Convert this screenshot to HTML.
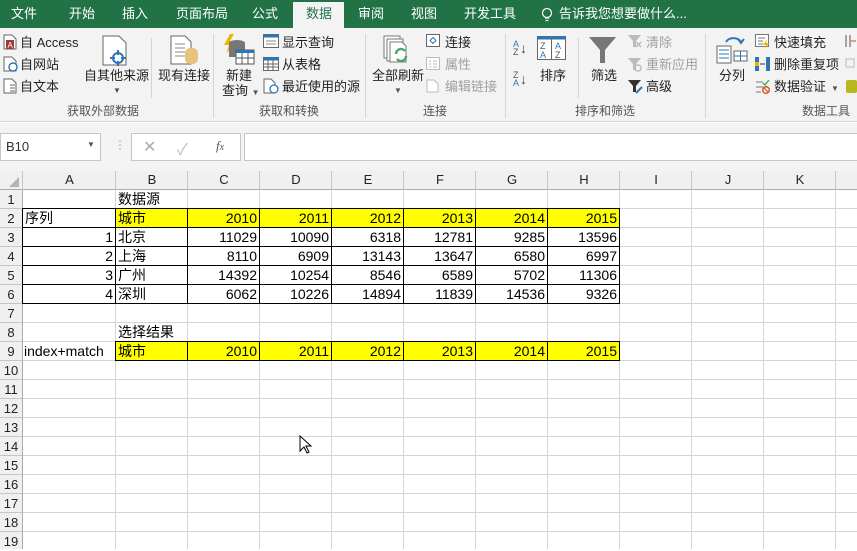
<!DOCTYPE html>
<html><head><meta charset="utf-8">
<style>
*{margin:0;padding:0;box-sizing:border-box}
body{width:857px;height:549px;overflow:hidden;position:relative;background:#fff;font-family:"Liberation Sans","Noto Sans CJK SC",sans-serif;color:#000}
.a{position:absolute;white-space:nowrap}
#tabs{left:0;top:0;width:857px;height:28px;background:#217346}
.t{position:absolute;top:0;height:28px;line-height:28px;color:#fff;font-size:13px}
#rib{left:0;top:28px;width:857px;height:94px;background:#f3f3f3;border-bottom:1px solid #d5d5d5}
.r{position:absolute;font-size:12px;color:#222;white-space:nowrap;line-height:16px}
.g{color:#555}
.dis{color:#a0a0a0}
.sep{position:absolute;top:6px;width:1px;height:84px;background:#d4d4d4}
.hd{position:absolute;font-size:13px;color:#222;text-align:center;line-height:18px}
.c{position:absolute;font-size:14px;line-height:19px;height:19px;white-space:nowrap}
.n{text-align:right;width:70px}
.vl{position:absolute;width:1px;background:#000}
.hl{position:absolute;height:1px;background:#000}
</style></head><body>
<div id="tabs" class="a">
<span class="t" style="left:11px">文件</span>
<span class="t" style="left:69px">开始</span>
<span class="t" style="left:122px">插入</span>
<span class="t" style="left:176px">页面布局</span>
<span class="t" style="left:252px">公式</span>
<div class="a" style="left:293px;top:2px;width:51px;height:26px;background:#f3f3f3"></div>
<span class="t" style="left:306px;color:#217346">数据</span>
<span class="t" style="left:358px">审阅</span>
<span class="t" style="left:411px">视图</span>
<span class="t" style="left:464px">开发工具</span>
<svg class="a" style="left:541px;top:7px" width="12" height="16"><circle cx="6" cy="6" r="4.5" fill="none" stroke="#fff" stroke-width="1.2"/><path d="M4 11h4M4.5 13.5h3" stroke="#fff" stroke-width="1.2"/></svg>
<span class="t" style="left:559px">告诉我您想要做什么...</span>
</div>
<div id="rib" class="a">
<svg class="a" style="left:3px;top:6px" width="16" height="16"><path d="M1 1h8l4 4v10H1z" fill="#fff" stroke="#666"/><rect x="3" y="6" width="8" height="9" fill="#a4373a"/><text x="4.5" y="14" font-size="8" fill="#fff" font-family="Liberation Sans">A</text></svg>
<span class="r" style="left:20px;top:7px;font-size:13px">自 Access</span>
<svg class="a" style="left:3px;top:28px" width="16" height="16"><path d="M1 1h8l4 4v10H1z" fill="#fff" stroke="#666"/><circle cx="10" cy="11" r="4" fill="#fff" stroke="#2e75b6" stroke-width="1.4"/></svg>
<span class="r" style="left:20px;top:29px;font-size:13px">自网站</span>
<svg class="a" style="left:3px;top:50px" width="16" height="16"><path d="M1 1h8l4 4v10H1z" fill="#fff" stroke="#666"/><path d="M7 7h5M7 10h5M7 13h5" stroke="#666"/></svg>
<span class="r" style="left:20px;top:51px;font-size:13px">自文本</span>
<svg class="a" style="left:102px;top:7px" width="28" height="32"><path d="M1 1h16l7 7v22H1z" fill="#fff" stroke="#666"/><circle cx="16" cy="23" r="5" fill="none" stroke="#2e75b6" stroke-width="2"/><path d="M16 15v5M16 26v5M8 23h5M19 23h5" stroke="#2e75b6" stroke-width="2"/></svg>
<span class="r" style="left:84px;top:40px;font-size:13px">自其他来源</span>
<span class="r g" style="left:113px;top:55px;font-size:8px">▼</span>
<div class="sep" style="left:151px;top:10px;height:60px"></div>
<svg class="a" style="left:170px;top:7px" width="30" height="30"><path d="M1 1h14l6 6v22H1z" fill="#fff" stroke="#666"/><path d="M5 9h10M5 13h10M5 17h10M5 21h10" stroke="#888"/><rect x="15" y="13" width="13" height="16" rx="5" fill="#e8c27a"/></svg>
<span class="r" style="left:158px;top:40px;font-size:13px">现有连接</span>
<span class="r g" style="left:67px;top:75px">获取外部数据</span>
<div class="sep" style="left:213px"></div>
<svg class="a" style="left:222px;top:5px" width="34" height="32"><path d="M8 1L2 12h5l-3 9 9-13H8l4-7z" fill="#f0b400"/><ellipse cx="15" cy="10" rx="8" ry="3" fill="#777"/><rect x="7" y="10" width="16" height="14" fill="#777"/><rect x="14" y="17" width="18" height="14" fill="#fff" stroke="#555"/><rect x="14" y="17" width="18" height="3" fill="#2e75b6"/><path d="M20 20v11M26 20v11M14 25h18" stroke="#555"/></svg>
<span class="r" style="left:226px;top:40px;font-size:13px">新建</span>
<span class="r" style="left:222px;top:55px;font-size:13px">查询 <span style="font-size:8px;color:#555">▼</span></span>
<svg class="a" style="left:263px;top:6px" width="16" height="14"><rect x="0.5" y="0.5" width="15" height="13" fill="#fff" stroke="#666"/><rect x="0.5" y="0.5" width="15" height="3" fill="#2e75b6"/><path d="M3 7h10M3 10h10" stroke="#888"/></svg>
<span class="r" style="left:282px;top:7px;font-size:13px">显示查询</span>
<svg class="a" style="left:263px;top:29px" width="16" height="14"><rect x="0.5" y="0.5" width="15" height="13" fill="#fff" stroke="#666"/><rect x="0.5" y="0.5" width="15" height="3" fill="#2e75b6"/><path d="M5 3v11M10 3v11M0 7h16M0 10h16" stroke="#666"/></svg>
<span class="r" style="left:282px;top:29px;font-size:13px">从表格</span>
<svg class="a" style="left:263px;top:50px" width="16" height="16"><path d="M1 1h7l4 4v10H1z" fill="#fff" stroke="#666"/><circle cx="11" cy="11" r="4" fill="#fff" stroke="#2e75b6" stroke-width="1.3"/></svg>
<span class="r" style="left:282px;top:51px;font-size:13px">最近使用的源</span>
<span class="r g" style="left:259px;top:75px">获取和转换</span>
<div class="sep" style="left:365px"></div>
<svg class="a" style="left:382px;top:6px" width="30" height="30"><path d="M2 2h16v22H2z" fill="#fff" stroke="#777"/><path d="M5 5h16v22H5z" fill="#fff" stroke="#777"/><path d="M8 8h12l4 4v16H8z" fill="#fff" stroke="#777"/><path d="M14 20a5 5 0 0 1 9-3M24 22a5 5 0 0 1-9 3" stroke="#4aa564" stroke-width="2.4" fill="none"/></svg>
<span class="r" style="left:372px;top:40px;font-size:13px">全部刷新</span>
<span class="r g" style="left:394px;top:55px;font-size:8px">▼</span>
<svg class="a" style="left:426px;top:6px" width="14" height="14"><rect x="0.5" y="0.5" width="13" height="12" fill="#fff" stroke="#666"/><path d="M4 6.5l3-3 3 3-3 3z" fill="none" stroke="#2e75b6"/></svg>
<span class="r" style="left:445px;top:7px;font-size:13px">连接</span>
<svg class="a" style="left:426px;top:29px" width="14" height="14"><rect x="0.5" y="0.5" width="13" height="12" fill="#fff" stroke="#bbb"/><path d="M3 4h2M7 4h4M3 7h2M7 7h4M3 10h2M7 10h4" stroke="#bbb"/></svg>
<span class="r dis" style="left:445px;top:29px;font-size:13px">属性</span>
<svg class="a" style="left:426px;top:51px" width="14" height="14"><path d="M1 1h7l4 4v8H1z" fill="#fff" stroke="#bbb"/></svg>
<span class="r dis" style="left:445px;top:51px;font-size:13px">编辑链接</span>
<span class="r g" style="left:423px;top:75px">连接</span>
<div class="sep" style="left:505px"></div>
<span class="r" style="left:513px;top:12px;font-size:9px;color:#2e75b6;line-height:8px">A<br><span style="color:#555">Z</span></span>
<span class="r" style="left:520px;top:12px;font-size:14px;color:#444">↓</span>
<span class="r" style="left:513px;top:43px;font-size:9px;color:#555;line-height:8px">Z<br><span style="color:#2e75b6">A</span></span>
<span class="r" style="left:520px;top:43px;font-size:14px;color:#444">↓</span>
<svg class="a" style="left:537px;top:8px" width="30" height="25"><rect x="0.5" y="0.5" width="28" height="23" fill="#fff" stroke="#666"/><rect x="0.5" y="0.5" width="28" height="3" fill="#2e75b6"/><path d="M14.5 3v21" stroke="#666"/><text x="3" y="13" font-size="9" fill="#555" font-family="Liberation Sans">Z</text><text x="18" y="13" font-size="9" fill="#2e75b6" font-family="Liberation Sans">A</text><text x="3" y="22" font-size="9" fill="#2e75b6" font-family="Liberation Sans">A</text><text x="18" y="22" font-size="9" fill="#555" font-family="Liberation Sans">Z</text></svg>
<span class="r" style="left:540px;top:40px;font-size:13px">排序</span>
<div class="sep" style="left:578px;top:10px;height:60px"></div>
<svg class="a" style="left:588px;top:8px" width="30" height="28"><path d="M1 1h27L17 14v13h-5V14z" fill="#777"/></svg>
<span class="r" style="left:591px;top:40px;font-size:13px">筛选</span>
<svg class="a" style="left:627px;top:6px" width="16" height="15"><path d="M1 1h13L9 7v6H6V7z" fill="#bbb"/><path d="M9 8l5 5M14 8l-5 5" stroke="#bbb" stroke-width="1.5"/></svg>
<span class="r dis" style="left:646px;top:7px;font-size:13px">清除</span>
<svg class="a" style="left:627px;top:29px" width="16" height="15"><path d="M1 1h13L9 7v6H6V7z" fill="#bbb"/><circle cx="11" cy="11" r="3" fill="none" stroke="#bbb" stroke-width="1.4"/></svg>
<span class="r dis" style="left:646px;top:29px;font-size:13px">重新应用</span>
<svg class="a" style="left:627px;top:51px" width="16" height="15"><path d="M1 1h13L9 7v6H6V7z" fill="#333"/><path d="M9 14l6-6" stroke="#2e75b6" stroke-width="2"/></svg>
<span class="r" style="left:646px;top:51px;font-size:13px">高级</span>
<span class="r g" style="left:575px;top:75px">排序和筛选</span>
<div class="sep" style="left:705px"></div>
<svg class="a" style="left:716px;top:6px" width="32" height="30"><path d="M10 8a8 6 0 0 1 15 0" fill="none" stroke="#2e75b6" stroke-width="2"/><path d="M22 5l3 4 3-4" fill="none" stroke="#2e75b6" stroke-width="2"/><rect x="1" y="12" width="14" height="17" fill="#fff" stroke="#666"/><path d="M3 16h10M3 20h10M3 24h10" stroke="#2e75b6"/><rect x="18" y="17" width="13" height="10" fill="#fff" stroke="#666"/><path d="M24.5 17v10M18 22h13" stroke="#2e75b6"/></svg>
<span class="r" style="left:719px;top:40px;font-size:13px">分列</span>
<svg class="a" style="left:755px;top:6px" width="16" height="15"><rect x="0.5" y="0.5" width="13" height="12" fill="#fff" stroke="#777"/><path d="M3 4h7M3 7h5M3 10h5" stroke="#777"/><path d="M12 5l-4 6h3l-1 4 4-6h-3z" fill="#f0b400"/></svg>
<span class="r" style="left:774px;top:7px;font-size:13px">快速填充</span>
<svg class="a" style="left:755px;top:29px" width="16" height="15"><rect x="0" y="0" width="4" height="14" fill="#2e75b6"/><rect x="0" y="5" width="4" height="4" fill="#f0b400"/><rect x="11" y="0" width="4" height="14" fill="#2e75b6"/><path d="M5 7h5" stroke="#333"/></svg>
<span class="r" style="left:774px;top:29px;font-size:13px">删除重复项</span>
<svg class="a" style="left:755px;top:51px" width="16" height="15"><path d="M1 3h7M1 8h7M1 13h5" stroke="#777"/><path d="M8 4l2 2 4-5" stroke="#4aa564" fill="none" stroke-width="1.4"/><circle cx="11" cy="11" r="3.3" fill="none" stroke="#d04a02" stroke-width="1.3"/><path d="M9 9l4 4" stroke="#d04a02"/></svg>
<span class="r" style="left:774px;top:51px;font-size:13px">数据验证</span>
<span class="r g" style="left:831px;top:53px;font-size:8px">▼</span>
<svg class="a" style="left:845px;top:6px" width="12" height="64"><path d="M1 1v12M5 1v12" stroke="#555"/><path d="M6 7h5" stroke="#d04a02"/><rect x="1" y="25" width="8" height="8" fill="none" stroke="#bbb"/><rect x="1" y="46" width="11" height="13" rx="2" fill="#b8b81e"/></svg>
<span class="r g" style="left:802px;top:75px">数据工具</span>
</div>
<div class="a" style="left:0;top:123px;width:857px;height:48px;background:#f3f3f3"></div>
<div class="a" style="left:0;top:133px;width:101px;height:28px;background:#fff;border:1px solid #c6c6c6"></div>
<span class="a" style="left:6px;top:137px;font-size:13px;line-height:20px;color:#333">B10</span>
<span class="a" style="left:87px;top:140px;font-size:8px;color:#555">▼</span>
<span class="a" style="left:114px;top:138px;font-size:12px;color:#aaa">⋮</span>
<div class="a" style="left:131px;top:133px;width:110px;height:28px;background:#fff;border:1px solid #c6c6c6"></div>
<span class="a" style="left:143px;top:137px;font-size:16px;color:#aaa">✕</span>
<span class="a" style="left:177px;top:136px;font-size:16px;color:#bbb">✓</span>
<span class="a" style="left:216px;top:138px;font-size:13px;color:#555;font-style:italic;font-family:'Liberation Serif',serif">f<span style="font-size:10px">x</span></span>
<div class="a" style="left:244px;top:133px;width:620px;height:28px;background:#fff;border:1px solid #c6c6c6"></div>
<div class="a" style="left:0;top:171px;width:857px;height:19px;background:#f0f0f0;border-bottom:1px solid #ababab"></div>
<div class="a" style="left:0;top:190px;width:23px;height:359px;background:#f0f0f0;border-right:1px solid #ababab"></div>
<svg class="a" style="left:8px;top:176px" width="12" height="12"><path d="M11 1v10H1z" fill="#b4b4b4"/></svg>
<div class="a" style="left:115px;top:171px;width:742px;height:19px;background:repeating-linear-gradient(to right,#c6c6c6 0 1px,transparent 1px 72px)"></div>
<div class="a" style="left:22px;top:171px;width:1px;height:19px;background:#c6c6c6"></div>
<span class="hd" style="left:23px;top:171px;width:93px">A</span>
<span class="hd" style="left:116px;top:171px;width:72px">B</span>
<span class="hd" style="left:188px;top:171px;width:72px">C</span>
<span class="hd" style="left:260px;top:171px;width:72px">D</span>
<span class="hd" style="left:332px;top:171px;width:72px">E</span>
<span class="hd" style="left:404px;top:171px;width:72px">F</span>
<span class="hd" style="left:476px;top:171px;width:72px">G</span>
<span class="hd" style="left:548px;top:171px;width:72px">H</span>
<span class="hd" style="left:620px;top:171px;width:72px">I</span>
<span class="hd" style="left:692px;top:171px;width:72px">J</span>
<span class="hd" style="left:764px;top:171px;width:72px">K</span>
<div class="a" style="left:23px;top:190px;width:834px;height:359px;background:repeating-linear-gradient(to bottom,transparent 0 18px,#d4d4d4 18px 19px)"></div>
<div class="a" style="left:115px;top:190px;width:742px;height:359px;background:repeating-linear-gradient(to right,#d4d4d4 0 1px,transparent 1px 72px)"></div>
<div class="a" style="left:0;top:190px;width:22px;height:359px;background:repeating-linear-gradient(to bottom,transparent 0 18px,#c6c6c6 18px 19px)"></div>
<div class="a" style="left:0;top:190px;width:22px;font-size:13px;line-height:19px;text-align:center;color:#222">1<br>2<br>3<br>4<br>5<br>6<br>7<br>8<br>9<br>10<br>11<br>12<br>13<br>14<br>15<br>16<br>17<br>18<br>19</div>
<div class="a" style="left:116px;top:208px;width:504px;height:19px;background:#ffff00"></div>
<div class="a" style="left:116px;top:341px;width:504px;height:19px;background:#ffff00"></div>
<div class="hl" style="left:22px;top:208px;width:598px"></div>
<div class="hl" style="left:22px;top:227px;width:598px"></div>
<div class="hl" style="left:22px;top:246px;width:598px"></div>
<div class="hl" style="left:22px;top:265px;width:598px"></div>
<div class="hl" style="left:22px;top:284px;width:598px"></div>
<div class="hl" style="left:22px;top:303px;width:598px"></div>
<div class="vl" style="left:22px;top:208px;height:96px"></div>
<div class="vl" style="left:115px;top:208px;height:96px"></div>
<div class="vl" style="left:187px;top:208px;height:96px"></div>
<div class="vl" style="left:259px;top:208px;height:96px"></div>
<div class="vl" style="left:331px;top:208px;height:96px"></div>
<div class="vl" style="left:403px;top:208px;height:96px"></div>
<div class="vl" style="left:475px;top:208px;height:96px"></div>
<div class="vl" style="left:547px;top:208px;height:96px"></div>
<div class="vl" style="left:619px;top:208px;height:96px"></div>
<div class="hl" style="left:115px;top:341px;width:505px"></div>
<div class="hl" style="left:115px;top:360px;width:505px"></div>
<div class="vl" style="left:115px;top:341px;height:20px"></div>
<div class="vl" style="left:187px;top:341px;height:20px"></div>
<div class="vl" style="left:259px;top:341px;height:20px"></div>
<div class="vl" style="left:331px;top:341px;height:20px"></div>
<div class="vl" style="left:403px;top:341px;height:20px"></div>
<div class="vl" style="left:475px;top:341px;height:20px"></div>
<div class="vl" style="left:547px;top:341px;height:20px"></div>
<div class="vl" style="left:619px;top:341px;height:20px"></div>
<span class="c" style="left:118px;top:190px">数据源</span>
<span class="c" style="left:25px;top:209px">序列</span>
<span class="c" style="left:118px;top:209px">城市</span>
<span class="c" style="left:118px;top:228px">北京</span>
<span class="c" style="left:118px;top:247px">上海</span>
<span class="c" style="left:118px;top:266px">广州</span>
<span class="c" style="left:118px;top:285px">深圳</span>
<span class="c n" style="left:43px;top:228px">1</span>
<span class="c n" style="left:43px;top:247px">2</span>
<span class="c n" style="left:43px;top:266px">3</span>
<span class="c n" style="left:43px;top:285px">4</span>
<span class="c" style="left:118px;top:323px">选择结果</span>
<span class="c" style="left:24px;top:342px">index+match</span>
<span class="c" style="left:118px;top:342px">城市</span>
<span class="c n" style="left:187px;top:209px">2010</span><span class="c n" style="left:259px;top:209px">2011</span><span class="c n" style="left:331px;top:209px">2012</span><span class="c n" style="left:403px;top:209px">2013</span><span class="c n" style="left:475px;top:209px">2014</span><span class="c n" style="left:547px;top:209px">2015</span>
<span class="c n" style="left:187px;top:228px">11029</span><span class="c n" style="left:259px;top:228px">10090</span><span class="c n" style="left:331px;top:228px">6318</span><span class="c n" style="left:403px;top:228px">12781</span><span class="c n" style="left:475px;top:228px">9285</span><span class="c n" style="left:547px;top:228px">13596</span>
<span class="c n" style="left:187px;top:247px">8110</span><span class="c n" style="left:259px;top:247px">6909</span><span class="c n" style="left:331px;top:247px">13143</span><span class="c n" style="left:403px;top:247px">13647</span><span class="c n" style="left:475px;top:247px">6580</span><span class="c n" style="left:547px;top:247px">6997</span>
<span class="c n" style="left:187px;top:266px">14392</span><span class="c n" style="left:259px;top:266px">10254</span><span class="c n" style="left:331px;top:266px">8546</span><span class="c n" style="left:403px;top:266px">6589</span><span class="c n" style="left:475px;top:266px">5702</span><span class="c n" style="left:547px;top:266px">11306</span>
<span class="c n" style="left:187px;top:285px">6062</span><span class="c n" style="left:259px;top:285px">10226</span><span class="c n" style="left:331px;top:285px">14894</span><span class="c n" style="left:403px;top:285px">11839</span><span class="c n" style="left:475px;top:285px">14536</span><span class="c n" style="left:547px;top:285px">9326</span>
<span class="c n" style="left:187px;top:342px">2010</span><span class="c n" style="left:259px;top:342px">2011</span><span class="c n" style="left:331px;top:342px">2012</span><span class="c n" style="left:403px;top:342px">2013</span><span class="c n" style="left:475px;top:342px">2014</span><span class="c n" style="left:547px;top:342px">2015</span>
<svg class="a" style="left:299px;top:435px" width="14" height="20"><path d="M1 1v15l4-4 3 6 2-1-3-6h5z" fill="#fff" stroke="#000" stroke-width="1"/></svg>
</body></html>
